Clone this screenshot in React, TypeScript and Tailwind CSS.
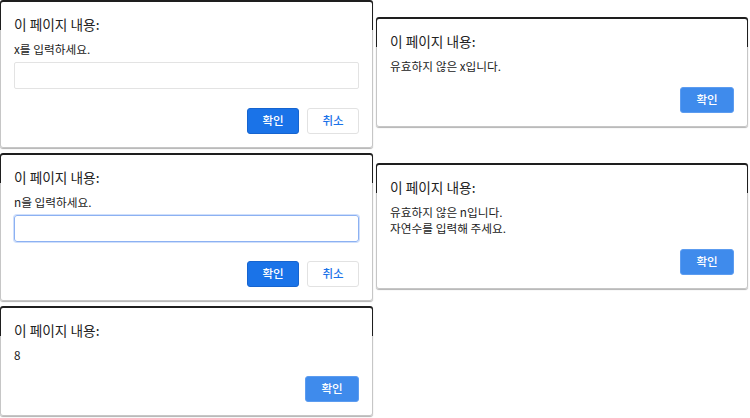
const font = {
  fontFamily: '"Noto Sans CJK KR", "Noto Sans", sans-serif',
};

type DialogProps = {
  lines: string[];
  input?: "idle" | "focus";
  light?: boolean;
};

function Dialog({ lines, input, light }: DialogProps) {
  return (
    <div className="rounded-[3px] bg-[linear-gradient(to_bottom,#1e1e1e_30px,#c6c6c6_30px)] px-px pt-[2px] pb-px shadow-[0_1px_1px_rgba(0,0,0,0.3)]">
      <div className="rounded-[2px] bg-white px-[13px] pt-[12px] pb-[13px] text-[#222]">
        <div className="text-[13.7px] leading-[20px]">이 페이지 내용:</div>
        <div className="mt-[7px] text-[11.7px] leading-[16px]">
          {lines.map((l) => (
            <div key={l}>{l}</div>
          ))}
        </div>
        {input && (
          <div
            className={
              input === "focus"
                ? "mt-[5px] h-[27px] rounded-[3px] border border-[#8cb1f2] shadow-[0_0_0_1px_#cfdffb]"
                : "mt-[5px] h-[27px] rounded-[2px] border border-[#e3e3e3]"
            }
          />
        )}
        <div
          className={
            input
              ? "mt-[19px] flex justify-end gap-[8px]"
              : "mt-[13px] flex justify-end"
          }
        >
          <div
            className={
              light
                ? "flex h-[26px] w-[54px] items-center justify-center rounded-[3px] border border-[#5c9cf0] bg-[#3f8bec] text-[11.5px] font-medium text-white"
                : "flex h-[26px] w-[52px] items-center justify-center rounded-[3px] border border-[#1664cf] bg-[#1a73e8] text-[11.5px] font-medium text-white"
            }
          >
            확인
          </div>
          {input && (
            <div className="flex h-[26px] w-[52px] items-center justify-center rounded-[3px] border border-[#e2e2e2] bg-white text-[11.5px] font-medium text-[#1a73e8]">
              취소
            </div>
          )}
        </div>
      </div>
    </div>
  );
}

export default function App() {
  return (
    <div className="flex h-[418px] w-[750px] bg-white" style={font}>
      <div className="flex w-[373px] flex-col">
        <Dialog lines={["x를 입력하세요."]} input="idle" />
        <div className="mt-[5px]">
          <Dialog lines={["n을 입력하세요."]} input="focus" />
        </div>
        <div className="mt-[5px]">
          <Dialog lines={["8"]} light />
        </div>
      </div>
      <div className="ml-[3px] flex w-[372px] flex-col pt-[17px]">
        <Dialog lines={["유효하지 않은 x입니다."]} light />
        <div className="mt-[36px]">
          <Dialog
            lines={["유효하지 않은 n입니다.", "자연수를 입력해 주세요."]}
            light
          />
        </div>
      </div>
    </div>
  );
}
